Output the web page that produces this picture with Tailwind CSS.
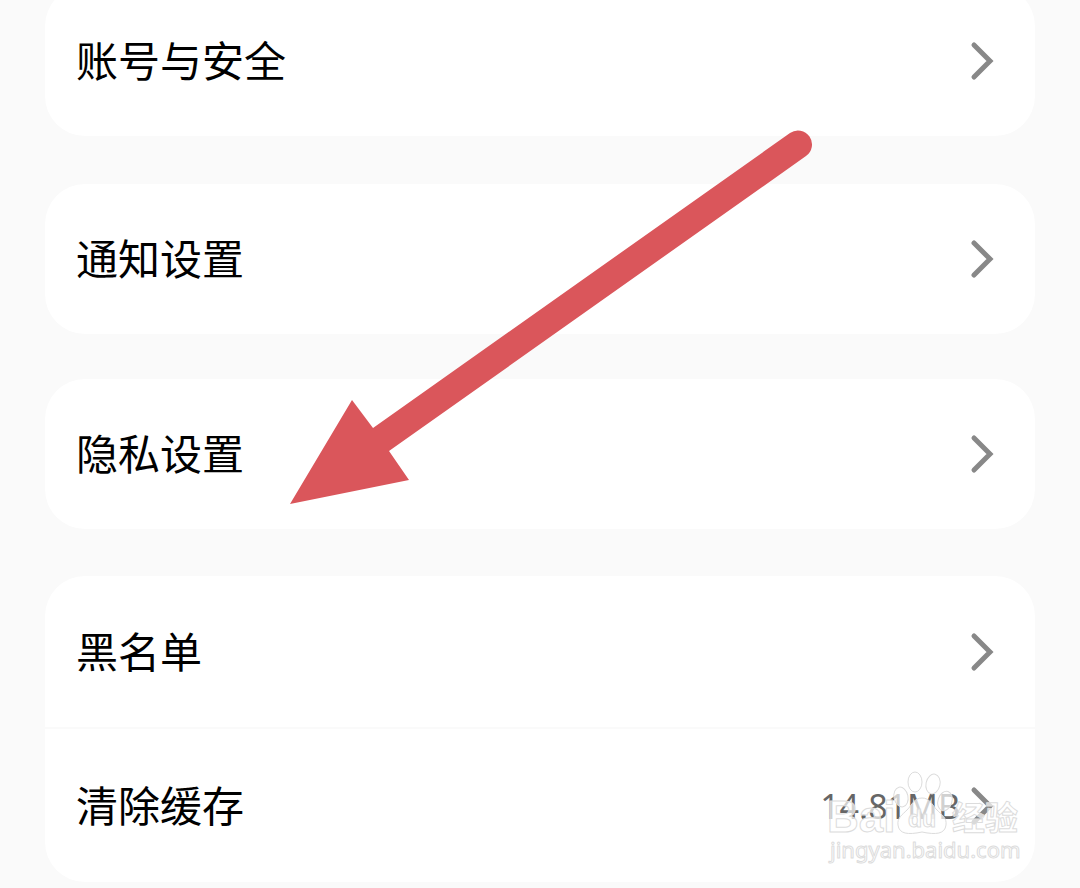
<!DOCTYPE html>
<html lang="zh-CN">
<head>
  <meta charset="UTF-8" />
  <meta name="viewport" content="width=device-width, initial-scale=1.0"/>
  <title>设置</title>
  <script src="https://cdn.jsdelivr.net/npm/@tailwindcss/browser@4"></script>
</head>
<body class="relative overflow-x-hidden bg-[#fafafa] font-['Noto_Sans','Noto_Sans_CJK_SC',sans-serif] text-[42px] leading-[60px] text-black">

  <svg class="hidden">
    <symbol id="chevron" viewBox="0 0 26 40">
      <path d="M4 4 L20 20 L4 36" fill="none" stroke="#888888" stroke-width="5" stroke-linecap="round" stroke-linejoin="miter"/>
    </symbol>
  </svg>

  <main class="-mt-3.5 px-[45px] pb-1.5">
    <nav class="mb-12 rounded-[40px] bg-white">
      <a href="#account" class="flex h-[150px] items-center justify-between pr-[39px] pl-[31px]">
        <span>账号与安全</span>
        <svg class="h-10 w-[26px]"><use href="#chevron"/></svg>
      </a>
    </nav>

    <nav class="mb-[45px] rounded-[40px] bg-white">
      <a href="#notice" class="flex h-[150px] items-center justify-between pr-[39px] pl-[31px]">
        <span>通知设置</span>
        <svg class="h-10 w-[26px]"><use href="#chevron"/></svg>
      </a>
    </nav>

    <nav class="mb-[47px] rounded-[40px] bg-white">
      <a href="#privacy" class="flex h-[150px] items-center justify-between pr-[39px] pl-[31px]">
        <span>隐私设置</span>
        <svg class="h-10 w-[26px]"><use href="#chevron"/></svg>
      </a>
    </nav>

    <nav class="rounded-[40px] bg-white">
      <a href="#blacklist" class="flex h-[153px] items-center justify-between border-b-2 border-[#fafafa] pr-[39px] pl-[31px]">
        <span>黑名单</span>
        <svg class="h-10 w-[26px]"><use href="#chevron"/></svg>
      </a>
      <a href="#cache" class="flex h-[153px] items-center justify-between pr-[39px] pl-[31px]">
        <span>清除缓存</span>
        <span class="flex items-center gap-2.5">
          <span class="text-[34px] text-[#666666]">14.81MB</span>
          <svg class="h-10 w-[26px]"><use href="#chevron"/></svg>
        </span>
      </a>
    </nav>
  </main>

  <!-- pointer to the privacy row -->
  <svg class="pointer-events-none absolute top-[128px] left-[288px] h-[380px] w-[528px]" viewBox="288 128 528 380">
    <path d="M290 504 L352 400 L373 428 L790 133 A14 14 0 0 1 806 156 L389 451 L409 480 Z" fill="#da565b"/>
  </svg>

  <!-- watermark -->
  <svg class="pointer-events-none absolute top-[768px] right-[52px] h-[104px] w-[208px]" viewBox="820 768 208 104">
    <g fill="#ffffff" fill-opacity="0.7" stroke="#dcdcdc" stroke-width="1" stroke-linejoin="round">
      <ellipse cx="901" cy="797" rx="7" ry="10" transform="rotate(-12 901 797)"/>
      <ellipse cx="915" cy="782" rx="7" ry="10"/>
      <ellipse cx="933" cy="784" rx="7" ry="10" transform="rotate(12 933 784)"/>
      <ellipse cx="945" cy="801" rx="7" ry="10" transform="rotate(18 945 801)"/>
      <path d="M922 798 C914 798 912 805 907 810 C902 815 897 818 898 825 C899 834 908 835 922 832 C936 835 945 834 946 825 C947 818 942 815 937 810 C932 805 930 798 922 798 Z"/>
      <text x="827" y="832" font-size="44" font-weight="700" font-family="Liberation Sans, sans-serif">Bai</text>
      <text x="908" y="827" font-size="23" font-weight="700" font-family="Liberation Sans, sans-serif">du</text>
      <text x="952" y="830" font-size="33" font-weight="700" font-family="Noto Sans CJK SC, sans-serif">经验</text>
      <text x="830" y="858" font-size="22" font-weight="400" font-family="Noto Sans, sans-serif">jingyan.baidu.com</text>
    </g>
  </svg>
</body>
</html>
